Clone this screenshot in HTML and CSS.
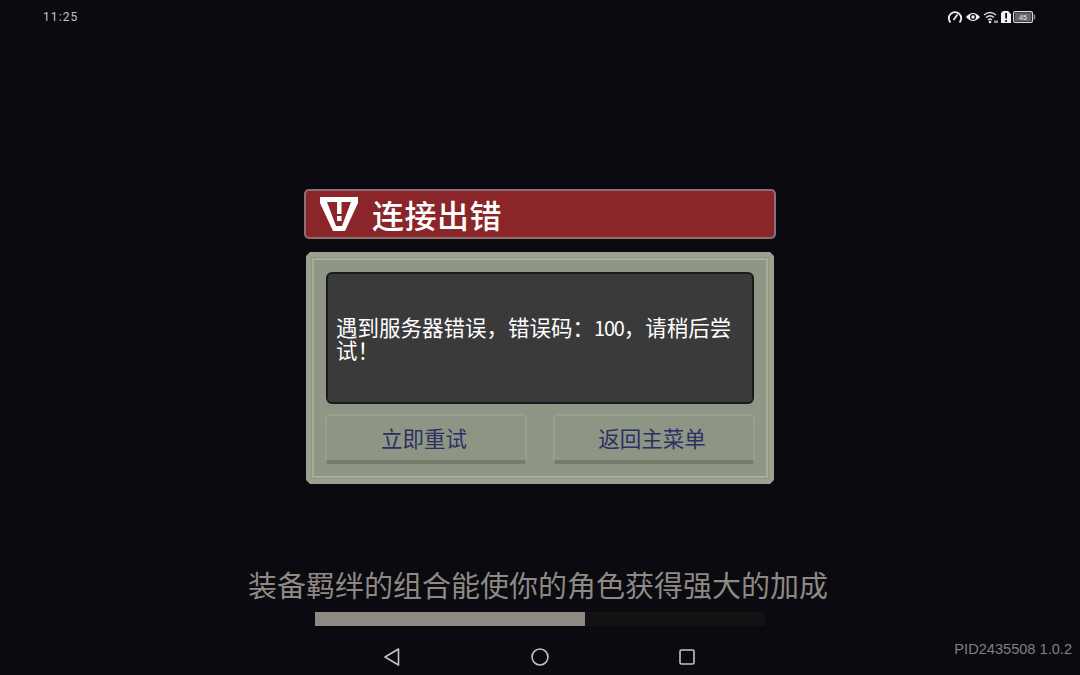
FILE: index.html
```html
<!DOCTYPE html>
<html lang="zh-CN">
<head>
    <title>连接出错</title>
    <meta http-equiv="Content-Type" content="text/html; charset=UTF-8" />
    <link rel="stylesheet" href="styles.css">
</head>
<body>
<div class="screen">
    <div class="status-bar">
        <span class="clock">11:25</span>
        <div class="status-icons">
            <svg width="16" height="14" viewBox="0 0 16 14"><path d="M3.5 12.5 A6.2 6.2 0 1 1 12.5 12.5" fill="none" stroke="#eee" stroke-width="1.8"/><path d="M6.5 10 L10.5 4.5" stroke="#eee" stroke-width="1.8"/></svg>
            <svg width="16" height="14" viewBox="0 0 16 14"><path d="M1 7 Q8 -1 15 7 Q8 15 1 7Z" fill="#f2f2f2"/><circle cx="8" cy="7" r="3" fill="#0a0a10"/><circle cx="8" cy="7" r="1.7" fill="#f2f2f2"/></svg>
            <svg width="16" height="14" viewBox="0 0 16 14"><path d="M1 5 Q7 0 13 5 M3 7.5 Q7 4 11 7.5 M5 10 Q7 8 9 10" fill="none" stroke="#ddd" stroke-width="1.4"/><circle cx="7" cy="12" r="1.3" fill="#eee"/><rect x="11" y="10.5" width="4" height="2.5" fill="#999"/></svg>
            <svg width="10" height="14" viewBox="0 0 10 14"><path d="M2 1 H7 L10 4 V13 H0 V3Z" fill="#f2f2f2"/><rect x="4.2" y="3" width="1.8" height="5.5" fill="#0a0a10"/><rect x="4.2" y="10" width="1.8" height="1.8" fill="#0a0a10"/></svg>
            <svg width="23" height="12" viewBox="0 0 23 12"><rect x="0.6" y="0.6" width="18.8" height="10.8" rx="1.5" fill="#0a0a10" stroke="#ddd" stroke-width="1.2"/><rect x="2" y="2" width="16" height="8" fill="#666"/><rect x="20.6" y="3.5" width="1.6" height="5" fill="#888"/><text x="10" y="9" class="battery-text">45</text></svg>
        </div>
    </div>

    <div class="dialog">
        <div class="title-bar">
            <svg class="warn-icon" width="38" height="34" viewBox="0 0 38 34">
                <path d="M0 0 H38 V6 L25 34 H13 L0 6Z" fill="#fff"/>
                <path d="M7 5 H31 L22 29 H16Z" fill="#8a252a"/>
                <rect x="17" y="5" width="4.5" height="12" fill="#fff"/>
                <rect x="17" y="19" width="4.5" height="5" fill="#fff"/>
            </svg>
            <h1 class="title">连接出错</h1>
        </div>
        <div class="panel">
            <div class="panel-inner">
                <div class="message">
                    <p>遇到服务器错误<span class="punct">，</span>错误码<span class="punct">：</span><span class="num">100</span><span class="punct">，</span>请稍后尝试<span class="punct">！</span></p>
                </div>
                <div class="actions">
                    <div class="btn">立即重试</div>
                    <div class="btn">返回主菜单</div>
                </div>
            </div>
        </div>
    </div>

    <div class="tip">装备羁绊的组合能使你的角色获得强大的加成</div>
    <div class="progress"><div class="progress-fill" style="width: 60%"></div></div>

    <div class="nav-bar">
        <svg width="18" height="20" viewBox="0 0 18 20"><path d="M15.5 2 L2 10 L15.5 18Z" fill="none" stroke="#c4c4c4" stroke-width="1.6" stroke-linejoin="round"/></svg>
        <svg width="18" height="18" viewBox="0 0 18 18"><circle cx="9" cy="9" r="8" fill="none" stroke="#c4c4c4" stroke-width="1.6"/></svg>
        <svg width="16" height="16" viewBox="0 0 16 16"><rect x="1" y="1" width="14" height="14" rx="1.5" fill="none" stroke="#c4c4c4" stroke-width="1.6"/></svg>
        <span class="pid">PID2435508 1.0.2</span>
    </div>
</div>
</body>
</html>
```

FILE: styles.css
```css
body {
    margin: 0;
    padding: 0;
    background-color: #0a0a10;
    font-family: "Noto Sans CJK SC", "Liberation Sans", sans-serif;
}

.screen {
    width: 1080px;
    height: 675px;
    display: flex;
    flex-direction: column;
    overflow: hidden;
}

/* Status bar */
.status-bar {
    height: 34px;
    display: flex;
    align-items: center;
    justify-content: space-between;
    padding: 0 44px 0 43px;
    color: #c4c4c4;
    font-family: "Roboto", sans-serif;
    font-size: 12px;
    letter-spacing: 1.1px;
}

.status-icons {
    display: flex;
    align-items: center;
    gap: 2px;
}

.battery-text {
    font-family: "Liberation Sans", sans-serif;
    font-size: 7px;
    letter-spacing: 0;
    fill: #eee;
    text-anchor: middle;
}

/* Dialog */
.dialog {
    width: 472px;
    margin: 155px 0 0 304px;
}

.title-bar {
    height: 46px;
    display: flex;
    align-items: center;
    gap: 14px;
    padding-left: 14px;
    background-color: #8a252a;
    border: 2px solid #8a7072;
    border-radius: 5px;
}

.warn-icon {
    flex: none;
}

.title {
    margin: 0;
    color: #fff;
    font-size: 32px;
    font-weight: 500;
    line-height: 46px;
    letter-spacing: 0.5px;
}

.panel {
    width: 468px;
    height: 232px;
    box-sizing: border-box;
    margin: 13px 0 0 2px;
    padding: 6px;
    background-color: #9aa18f;
    clip-path: polygon(4px 0, calc(100% - 4px) 0, 100% 4px, 100% calc(100% - 4px), calc(100% - 4px) 100%, 4px 100%, 0 calc(100% - 4px), 0 4px);
}

.panel-inner {
    height: 100%;
    box-sizing: border-box;
    padding: 12px 13px 14px 13px;
    background-color: #8f9686;
    border: 2px solid #a6ac9a;
    box-shadow: 0 0 0 1px #8d9482;
}

.message {
    height: 132px;
    box-sizing: border-box;
    display: flex;
    align-items: center;
    padding: 0 8px;
    margin: 0 -1px;
    background-color: #3a3a3a;
    border: 2px solid #171b1a;
    border-radius: 6px;
    color: #fff;
    font-size: 21.5px;
    line-height: 22px;
}

.message p {
    margin: 0;
}

.punct {
    font-family: "Noto Sans CJK TC", sans-serif;
}

.num {
    font-size: 20px;
    letter-spacing: -1.2px;
}

.actions {
    display: flex;
    justify-content: space-between;
    margin: 10px -2px 0 -2px;
}

.btn {
    width: 202px;
    height: 50px;
    box-sizing: border-box;
    display: flex;
    align-items: center;
    justify-content: center;
    padding: 0 4px 2px 0;
    background-color: #8d9584;
    border: 2px solid #989f8d;
    border-bottom: 4px solid #747b6b;
    border-radius: 4px;
    color: #2c3064;
    font-size: 21.5px;
}

/* Loading tip */
.tip {
    margin: 81px 0 0 248px;
    color: #8f8984;
    font-size: 29px;
    line-height: 38px;
}

.progress {
    width: 450px;
    height: 14px;
    margin: 9px 0 0 315px;
    background-color: #121212;
}

.progress-fill {
    height: 100%;
    background-color: #8f8984;
}

/* Navigation bar */
.nav-bar {
    position: relative;
    flex: 1;
    display: flex;
    align-items: center;
    justify-content: center;
    gap: 130px;
    padding: 13px 2px 0 0;
}

.pid {
    position: absolute;
    right: 8px;
    top: 15px;
    color: #808080;
    font-family: "Liberation Sans", sans-serif;
    font-size: 14.6px;
}
```
